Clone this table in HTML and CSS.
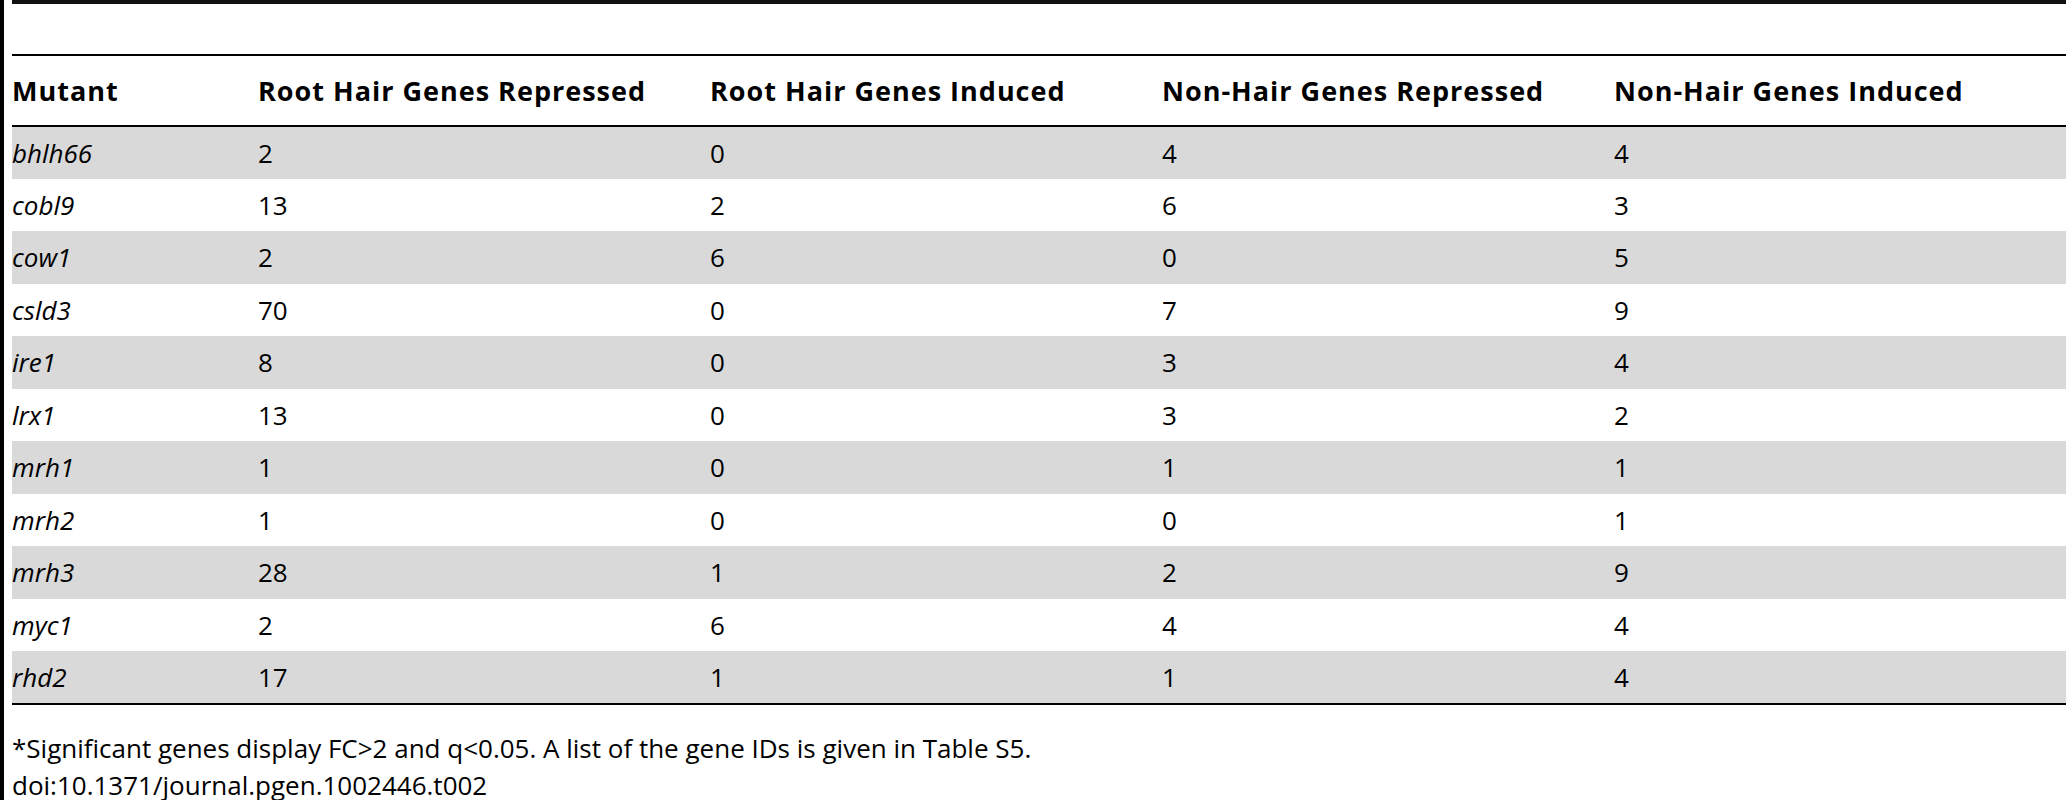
FILE: index.html
```html
<!DOCTYPE html>
<html>
<head>
<meta charset="utf-8">
<link rel="stylesheet" href="styles.css">
</head>
<body>
<div class="frame">
  <div class="top-rule"></div>
  <div class="title-space"></div>
  <table class="data">
    <colgroup>
      <col class="c-first">
      <col class="c-num">
      <col class="c-num">
      <col class="c-num">
      <col class="c-num">
    </colgroup>
    <thead>
      <tr>
        <th>Mutant</th>
        <th>Root Hair Genes Repressed</th>
        <th>Root Hair Genes Induced</th>
        <th>Non-Hair Genes Repressed</th>
        <th>Non-Hair Genes Induced</th>
      </tr>
    </thead>
    <tbody>
      <tr><td class="gene">bhlh66</td><td>2</td><td>0</td><td>4</td><td>4</td></tr>
      <tr><td class="gene">cobl9</td><td>13</td><td>2</td><td>6</td><td>3</td></tr>
      <tr><td class="gene">cow1</td><td>2</td><td>6</td><td>0</td><td>5</td></tr>
      <tr><td class="gene">csld3</td><td>70</td><td>0</td><td>7</td><td>9</td></tr>
      <tr><td class="gene">ire1</td><td>8</td><td>0</td><td>3</td><td>4</td></tr>
      <tr><td class="gene">lrx1</td><td>13</td><td>0</td><td>3</td><td>2</td></tr>
      <tr><td class="gene">mrh1</td><td>1</td><td>0</td><td>1</td><td>1</td></tr>
      <tr><td class="gene">mrh2</td><td>1</td><td>0</td><td>0</td><td>1</td></tr>
      <tr><td class="gene">mrh3</td><td>28</td><td>1</td><td>2</td><td>9</td></tr>
      <tr><td class="gene">myc1</td><td>2</td><td>6</td><td>4</td><td>4</td></tr>
      <tr><td class="gene">rhd2</td><td>17</td><td>1</td><td>1</td><td>4</td></tr>
    </tbody>
  </table>
  <div class="notes">
    <p>*Significant genes display FC&gt;2 and q&lt;0.05. A list of the gene IDs is given in Table S5.</p>
    <p>doi:10.1371/journal.pgen.1002446.t002</p>
  </div>
</div>
</body>
</html>
```

FILE: styles.css
```css
html, body {
  margin: 0;
  padding: 0;
  background: #ffffff;
}

body {
  font-family: "Open Sans", "Liberation Sans", sans-serif;
  color: #000000;
  font-size: 26px;
}

.frame {
  border-left: 4px solid #000000;
  padding-left: 8px;
  min-height: 800px;
  box-sizing: border-box;
}

.top-rule {
  height: 4px;
  background: #111111;
}

.title-space {
  height: 50px;
}

.data {
  width: 100%;
  border-collapse: collapse;
  table-layout: fixed;
}

.c-first {
  width: 246px;
}

.c-num {
  width: 452px;
}

.data th,
.data td {
  text-align: left;
  padding: 0;
  vertical-align: middle;
  white-space: nowrap;
}

.data thead tr {
  height: 71px;
  border-top: 2px solid #000000;
  border-bottom: 2px solid #000000;
}

.data th {
  font-weight: 700;
  font-size: 27px;
  letter-spacing: 1px;
}

.data tbody tr {
  height: 52.5px;
}

.data tbody tr:nth-child(odd) {
  background: #d9d9d9;
}

.data tbody tr:last-child {
  border-bottom: 2px solid #000000;
}

.gene {
  font-style: italic;
}

.notes {
  padding-top: 25px;
}

.notes p {
  margin: 0;
  line-height: 37px;
}
```
